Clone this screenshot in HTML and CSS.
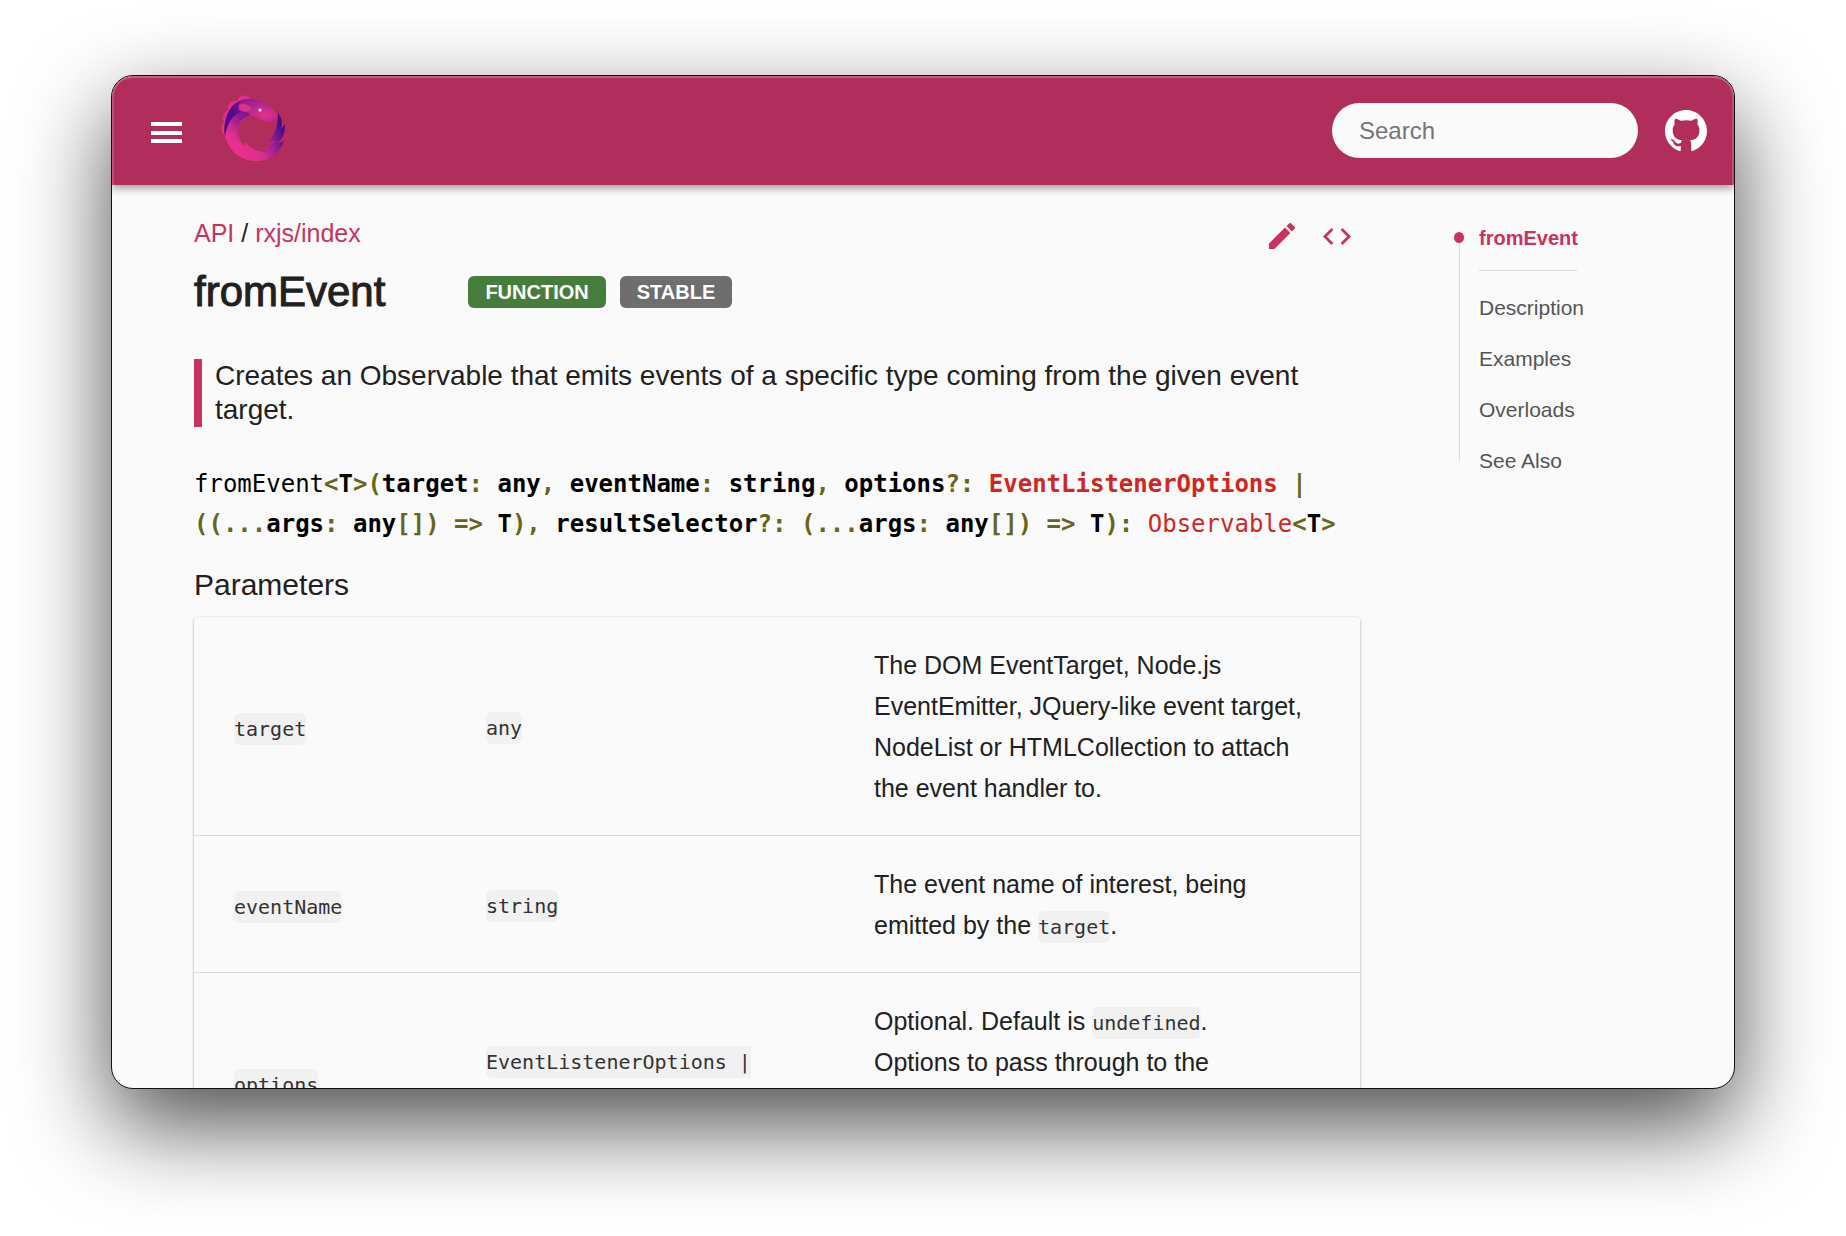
FILE: index.html
```html
<!DOCTYPE html>
<html lang="en">
<head>
<meta charset="utf-8">
<meta name="viewport" content="width=device-width, initial-scale=1">
<title>RxJS - fromEvent</title>
<link rel="stylesheet" href="styles.css">
</head>
<body>
<div class="window">
  <header class="topbar">
    <button class="menu" type="button" aria-label="Toggle menu">
      <svg viewBox="0 0 31 21" width="31" height="21" fill="#fff"><path d="M0 0h31v4H0zM0 9h31v4H0zM0 17h31v4H0z"/></svg>
    </button>
    <a class="logo" href="#" aria-label="Home">
      <svg viewBox="0 0 64 67" width="64" height="67">
        <defs>
          <linearGradient id="body" x1="0.25" y1="0.7" x2="0.95" y2="0.4"><stop offset="0" stop-color="#e8308c"/><stop offset="0.35" stop-color="#d92f8f"/><stop offset="0.75" stop-color="#8a1c8f"/><stop offset="1" stop-color="#4b0a8c"/></linearGradient>
          <linearGradient id="neck" x1="0.9" y1="0" x2="0.3" y2="0.8"><stop offset="0" stop-color="#7a178f"/><stop offset="0.4" stop-color="#8a1c8f"/><stop offset="1" stop-color="#e8308c"/></linearGradient>
          <linearGradient id="back" x1="1" y1="0" x2="0" y2="1"><stop offset="0" stop-color="#b0258f"/><stop offset="0.5" stop-color="#570b8c"/><stop offset="1" stop-color="#3b058c"/></linearGradient>
          <radialGradient id="head" cx="0.7" cy="0.7" r="0.75"><stop offset="0" stop-color="#e8308c"/><stop offset="1" stop-color="#94208f"/></radialGradient>
        </defs>
        <path fill="#e0308a" d="M30 4C27-1 18-1 16 6 11 5 6 9 7 15 2 17 1 23 3 27-1 31 0 38 4 41L12 18Z"/>
        <path fill="url(#body)" d="M29 20C20 23 17 29 17 36 17 42 19 47 24 51L24 46C28 53 36 57 45 57L48 55 39 53C46 53 51 50 54 46L47 46C53 41 57 33 57 18 61 23 62 28 60 34L64 29C64 37 63 42 57 48L63 46C59 59 48 66 35 66 18 66 4 53 4 36 4 22 12 10 24 13Z"/>
        <path fill="url(#neck)" d="M4 42C2 21 13 7 28 15L29 20C20 23 17 29 17 36 17 41 18 45 21 48L8 50Z"/>
        <path fill="url(#back)" d="M4 42C1 20 12 2 31 4L27 17C13 15 6 28 4 42Z"/>
        <path fill="url(#head)" d="M20 6C34-1 53 10 56 21 55 27 48 28 41 25 32 22 27 16 17 15Z"/>
        <path fill="#d9308f" d="M18 10C22 7 28 10 31 14 27 17 21 18 18 14Z"/>
        <circle cx="39" cy="15" r="1.500" fill="#fff"/>
      </svg>
    </a>
    <form class="search" role="search"><input type="search" placeholder="Search" aria-label="Search"></form>
    <a class="github" href="#" aria-label="GitHub">
      <svg viewBox="0 0 16 16" width="42" height="42" fill="#fff"><path d="M8 0C3.580 0 0 3.580 0 8c0 3.540 2.290 6.530 5.470 7.590.4.070.55-.17.55-.38 0-.19-.01-.82-.01-1.490-2.010.37-2.530-.49-2.690-.94-.09-.23-.48-.94-.82-1.130-.28-.15-.68-.52-.01-.53.63-.01 1.080.58 1.230.82.72 1.210 1.870.87 2.330.66.07-.52.28-.87.51-1.070-1.780-.2-3.640-.89-3.640-3.950 0-.87.31-1.590.82-2.150-.08-.2-.36-1.020.08-2.120 0 0 .67-.21 2.200.82.64-.18 1.320-.27 2-.27s1.360.09 2 .27c1.530-1.040 2.200-.82 2.200-.82.44 1.100.16 1.920.08 2.120.51.56.82 1.270.82 2.150 0 3.070-1.870 3.750-3.650 3.950.29.25.54.73.54 1.480 0 1.070-.01 1.930-.01 2.200 0 .21.15.46.55.38A8.010 8.010 0 0 0 16 8c0-4.420-3.580-8-8-8z"/></svg>
    </a>
  </header>
  <div class="page">
    <main class="content">
      <div class="crumbs">
        <nav aria-label="Breadcrumb"><a href="#">API</a> / <a href="#">rxjs/index</a></nav>
        <div class="actions">
          <a href="#" aria-label="Edit this page"><svg viewBox="3 3 18 18" width="26" height="26" fill="currentColor"><path d="M3 17.250V21h3.750L17.810 9.940l-3.750-3.750L3 17.250zM20.710 7.040a1 1 0 0 0 0-1.410l-2.340-2.340a1 1 0 0 0-1.410 0l-1.830 1.830 3.750 3.750 1.830-1.830z"/></svg></a>
          <a href="#" aria-label="View source"><svg viewBox="2 6 20 12" width="28" height="17" fill="currentColor"><path d="M9.400 16.600L4.800 12l4.600-4.600L8 6l-6 6 6 6 1.400-1.400zm5.200 0l4.600-4.600-4.600-4.600L16 6l6 6-6 6-1.400-1.400z"/></svg></a>
        </div>
      </div>
      <div class="title">
        <h1>fromEvent</h1>
        <span class="badge function">FUNCTION</span>
        <span class="badge">STABLE</span>
      </div>
      <p class="summary">Creates an Observable that emits events of a specific type coming from the given event target.</p>
      <code class="signature"><span class="name">fromEvent</span><i>&lt;</i>T<i>&gt;(</i>target<i>:</i> any<i>,</i> eventName<i>:</i> string<i>,</i> options<i>?:</i> <a href="#">EventListenerOptions</a> <i>|</i> <i>((...</i>args<i>:</i> any<i>[])</i> <i>=&gt;</i> T<i>),</i> resultSelector<i>?:</i> <i>(...</i>args<i>:</i> any<i>[])</i> <i>=&gt;</i> T<i>):</i> <a class="name" href="#">Observable</a><i>&lt;</i>T<i>&gt;</i></code>
      <h2>Parameters</h2>
      <table class="params">
        <tbody>
          <tr><td><code>target</code></td><td><code>any</code></td><td>The DOM EventTarget, Node.js EventEmitter, JQuery-like event target, NodeList or HTMLCollection to attach the event handler to.</td></tr>
          <tr><td><code>eventName</code></td><td><code>string</code></td><td>The event name of interest, being emitted by the <code>target</code>.</td></tr>
          <tr><td><code>options</code></td><td><code>EventListenerOptions | ((...args: any[]) =&gt; T)</code></td><td>Optional. Default is <code>undefined</code>. Options&nbsp;to pass through to the underlying <code>addListener</code>, <code>addEventListener</code> or <code>on</code> functions.</td></tr>
        </tbody>
      </table>
    </main>
    <nav class="toc" aria-label="On this page">
      <ul>
        <li class="active"><a href="#">fromEvent</a></li>
        <li><a href="#">Description</a></li>
        <li><a href="#">Examples</a></li>
        <li><a href="#">Overloads</a></li>
        <li><a href="#">See Also</a></li>
      </ul>
    </nav>
  </div>
</div>
</body>
</html>
```
FILE: styles.css
```css
* { box-sizing: border-box; }

body {
  margin: 0;
  height: 100vh;
  padding: 75px 111px 147px;
  background: #fff;
  color: #212121;
  font-family: "Liberation Sans", Arial, sans-serif;
  font-size: 25px;
  overflow: hidden;
}

a { color: #c83360; text-decoration: none; }
svg { display: block; }

.window {
  height: 100%;
  overflow: hidden;
  border: 1px solid #111;
  border-radius: 22px;
  background: #fafafa;
  box-shadow: 0 36px 92px rgba(0, 0, 0, .7);
}

.topbar {
  position: relative;
  display: flex;
  align-items: center;
  height: 109px;
  padding: 0 27px 0 39px;
  border-radius: 21px 21px 0 0;
  background: #b12d5b;
  box-shadow: inset 0 2px #c75f83, inset 2px 0 #c0507a, inset -2px 0 #c0507a, 0 3px 8px rgba(0, 0, 0, .4);
}

.menu { padding: 4px 0 0; border: 0; background: none; }
.logo { margin: -4px auto 0 39px; }

.search input {
  display: block;
  width: 306px;
  height: 55px;
  padding: 0 27px;
  border: 0;
  border-radius: 28px;
  background: #fafafa;
  font: 24px "Liberation Sans", Arial, sans-serif;
}
.search input::placeholder { color: #757575; }
.github { margin-left: 27px; }

.page { display: flex; align-items: flex-start; }

.content { flex: 1; min-width: 0; padding: 32px 0 0 82px; }

.crumbs { display: flex; justify-content: space-between; line-height: 32px; }
.actions { display: flex; align-items: center; gap: 28px; padding: 6px 9px 0 0; }

.title { display: flex; align-items: center; gap: 14px; margin-top: 18px; }
.title h1 {
  margin: 0 69px 0 0;
  font-size: 42px;
  font-weight: 400;
  line-height: 50px;
  -webkit-text-stroke: 1px;
}
.badge {
  padding: 0 17px;
  border-radius: 6px;
  background: #6e6e6e;
  color: #fff;
  font-size: 20px;
  font-weight: 700;
  line-height: 32px;
}
.badge.function { background: #467d3c; }

.summary {
  margin: 42px 0 37px;
  padding-left: 13px;
  border-left: 8px solid #c83360;
  font-size: 28px;
  line-height: 34px;
}

code { font-family: "DejaVu Sans Mono", monospace; }

.signature {
  display: block;
  color: #000;
  font-size: 24px;
  font-weight: 700;
  line-height: 40px;
}
.signature i { color: #66661a; font-style: normal; }
.signature a { color: #d0281e; }
.signature .name { font-weight: 400; }

h2 { margin: 23px 0 14px; font-size: 30px; font-weight: 400; line-height: 36px; }

.params {
  width: 100%;
  table-layout: fixed;
  border-collapse: collapse;
  border-radius: 4px;
  box-shadow: 0 1px 3px rgba(0, 0, 0, .35);
}
.params td {
  padding: 28px 40px 26px;
  border-bottom: 1px solid #dbdbdb;
  line-height: 41px;
}
.params td:nth-child(1) { width: 252px; }
.params td:nth-child(2) { width: 388px; }
.params code {
  padding: 4px 0;
  border-radius: 6px;
  background: #f1f1f1;
  color: #333;
  font-size: 20px;
  line-height: 20px;
}
.params td:nth-child(2) code { line-height: 41px; }

.toc { width: 374px; padding: 41px 0 0 99px; }
.toc ul {
  position: relative;
  margin: 0;
  padding: 0 0 0 20px;
  list-style: none;
}
.toc ul::before {
  content: "";
  position: absolute;
  top: 12px;
  bottom: 12px;
  left: 0;
  border-left: 1px solid #dbdbdb;
}
.toc li { margin-bottom: 27px; font-size: 21px; line-height: 24px; }
.toc li:last-child { margin-bottom: 0; }
.toc a { color: #555; }
.toc .active {
  position: relative;
  width: 98px;
  margin-bottom: 25px;
  padding-bottom: 20px;
  border-bottom: 1px solid #dbdbdb;
  font-size: 20px;
}
.toc .active a { color: #c83360; font-weight: 700; }
.toc .active::before {
  content: "";
  position: absolute;
  top: 6px;
  left: -25px;
  width: 10px;
  height: 11px;
  border-radius: 50%;
  background: #c83360;
}
```
